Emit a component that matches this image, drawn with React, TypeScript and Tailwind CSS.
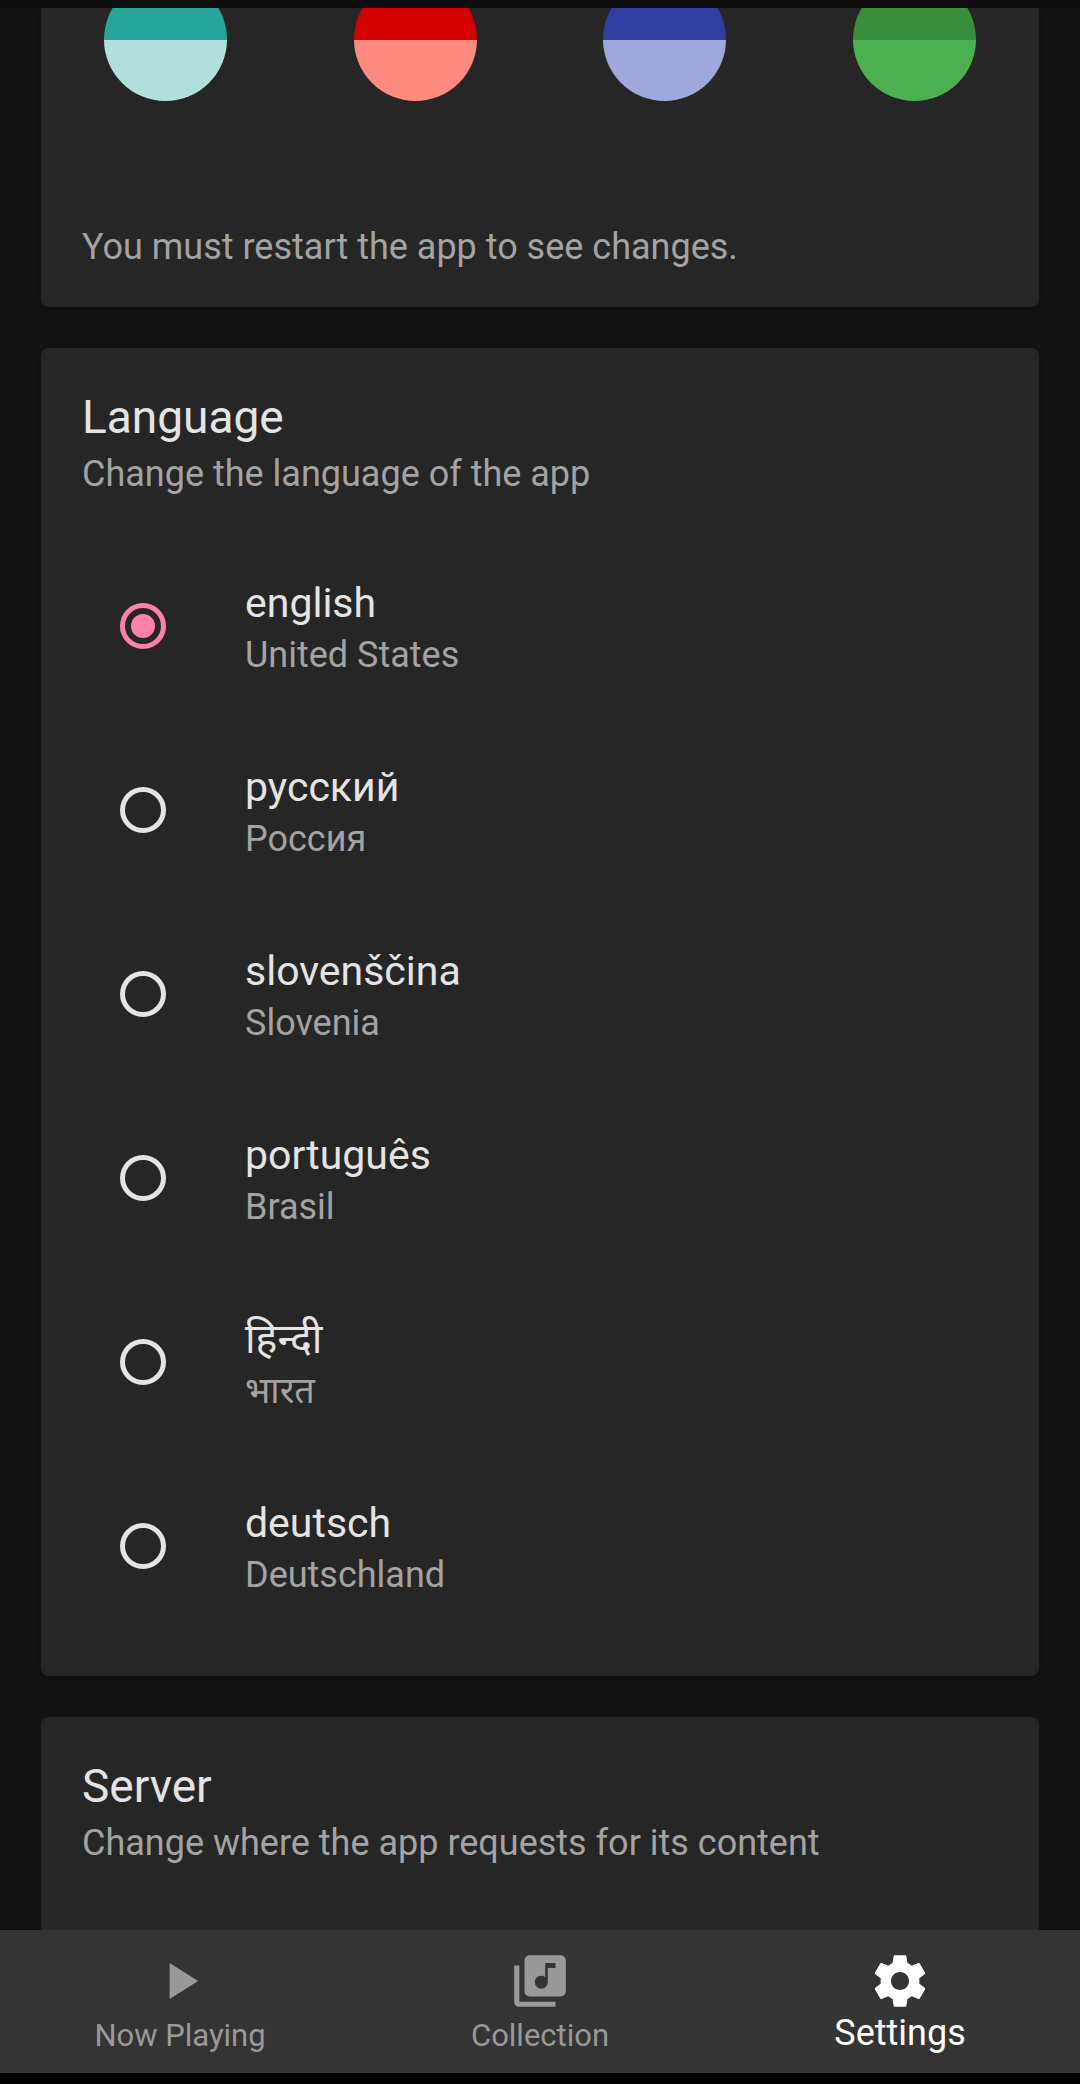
import { useState } from "react";

type Language = {
  code: string;
  name: string;
  region: string;
};

const swatches = [
  { id: "teal", top: "bg-[#26a69a]", bottom: "bg-[#b2dfdb]" },
  { id: "red", top: "bg-[#d50000]", bottom: "bg-[#ff8a80]" },
  { id: "indigo", top: "bg-[#303f9f]", bottom: "bg-[#9fa8da]" },
  { id: "green", top: "bg-[#388e3c]", bottom: "bg-[#4caf50]" },
];

const languages: Language[] = [
  { code: "en", name: "english", region: "United States" },
  { code: "ru", name: "русский", region: "Россия" },
  { code: "sl", name: "slovenščina", region: "Slovenia" },
  { code: "pt", name: "português", region: "Brasil" },
  { code: "hi", name: "हिन्दी", region: "भारत" },
  { code: "de", name: "deutsch", region: "Deutschland" },
];

const tabs = [
  { label: "Now Playing", path: "M8 5v14l11-7z" },
  {
    label: "Collection",
    path: "M20 2H8c-1.1 0-2 .9-2 2v12c0 1.1.9 2 2 2h12c1.1 0 2-.9 2-2V4c0-1.1-.9-2-2-2zm-2 5h-3v5.5c0 1.38-1.12 2.5-2.5 2.5S10 13.88 10 12.5s1.12-2.5 2.5-2.5c.57 0 1.08.19 1.5.51V5h4v2zM4 6H2v14c0 1.1.9 2 2 2h14v-2H4V6z",
  },
  {
    label: "Settings",
    path: "M19.43 12.98c.04-.32.07-.64.07-.98s-.03-.66-.07-.98l2.11-1.65c.19-.15.24-.42.12-.64l-2-3.46c-.12-.22-.39-.3-.61-.22l-2.49 1c-.52-.4-1.08-.73-1.69-.98l-.38-2.65C14.46 2.18 14.25 2 14 2h-4c-.25 0-.46.18-.49.42l-.38 2.65c-.61.25-1.17.59-1.69.98l-2.49-1c-.23-.09-.49 0-.61.22l-2 3.46c-.13.22-.07.49.12.64l2.11 1.65c-.04.32-.07.65-.07.98s.03.66.07.98l-2.11 1.65c-.19.15-.24.42-.12.64l2 3.46c.12.22.39.3.61.22l2.49-1c.52.4 1.08.73 1.69.98l.38 2.65c.03.24.24.42.49.42h4c.25 0 .46-.18.49-.42l.38-2.65c.61-.25 1.17-.59 1.69-.98l2.49 1c.23.09.49 0 .61-.22l2-3.46c.12-.22.07-.49-.12-.64l-2.11-1.65zM12 15.5c-1.93 0-3.5-1.57-3.5-3.5s1.57-3.5 3.5-3.5 3.5 1.57 3.5 3.5-1.57 3.5-3.5 3.5z",
  },
];

function CardHeader({ title, subtitle }: { title: string; subtitle: string }) {
  return (
    <header>
      <h2 className="text-[46px] leading-[58px] text-[#e4e4e4]">{title}</h2>
      <p className="text-[36px] leading-[56px] text-[#a3a3a3]">{subtitle}</p>
    </header>
  );
}

function LanguageOption({
  language,
  checked,
  onSelect,
}: {
  language: Language;
  checked: boolean;
  onSelect: () => void;
}) {
  return (
    <label className="flex h-[184px] cursor-pointer items-center gap-[79px] pl-[38px]">
      <input
        type="radio"
        name="language"
        value={language.code}
        checked={checked}
        onChange={onSelect}
        className="grid size-[46px] shrink-0 appearance-none place-items-center rounded-full border-[5px] border-[#e4e4e4] before:size-6 before:rounded-full checked:border-[#ff80ab] checked:before:bg-[#ff80ab]"
      />
      <span className="flex flex-col pt-1.5" lang={language.code}>
        <span className="text-[41px] leading-[52px] text-[#e4e4e4]">
          {language.name}
        </span>
        <span className="text-[36px] leading-[52px] text-[#a3a3a3]">
          {language.region}
        </span>
      </span>
    </label>
  );
}

export default function App() {
  const [language, setLanguage] = useState("en");
  const [tab, setTab] = useState("Settings");

  return (
    <div className="flex h-screen flex-col bg-[#121212] font-[Roboto,'Noto_Sans_Devanagari','Noto_Sans',sans-serif]">
      <div className="h-2 shrink-0 bg-[#0d0d0d]" />

      <main className="flex min-h-0 flex-1 flex-col gap-[41px] overflow-hidden px-[41px]">
        <section className="shrink-0 rounded-b-lg bg-[#262626] pb-8 shadow-md">
          {/* swatches are scrolled halfway under the status bar */}
          <div className="grid h-[93px] grid-cols-4 content-end justify-items-center overflow-hidden">
            {swatches.map((swatch) => (
              <button
                key={swatch.id}
                aria-label={swatch.id}
                className="flex size-[123px] flex-col overflow-hidden rounded-full"
              >
                <span className={`w-full flex-1 ${swatch.top}`} />
                <span className={`w-full flex-1 ${swatch.bottom}`} />
              </button>
            ))}
          </div>
          <p className="mt-[118px] px-[41px] text-[36px] leading-[56px] text-[#a3a3a3]">
            You must restart the app to see changes.
          </p>
        </section>

        <section className="shrink-0 rounded-lg bg-[#262626] px-[41px] pt-10 pb-[38px] shadow-md">
          <CardHeader
            title="Language"
            subtitle="Change the language of the app"
          />
          <div className="mt-8">
            {languages.map((item) => (
              <LanguageOption
                key={item.code}
                language={item}
                checked={item.code === language}
                onSelect={() => setLanguage(item.code)}
              />
            ))}
          </div>
        </section>

        <section className="flex-1 rounded-t-lg bg-[#262626] px-[41px] pt-10">
          <CardHeader
            title="Server"
            subtitle="Change where the app requests for its content"
          />
        </section>
      </main>

      <nav className="grid h-[143px] shrink-0 grid-cols-3 bg-[#343434]">
        {tabs.map(({ label, path }) => (
          <button
            key={label}
            onClick={() => setTab(label)}
            className={`flex flex-col items-center pt-5 ${
              label === tab
                ? "text-[36px] leading-[42px] text-white"
                : "text-[31px] leading-[48px] text-[#999999]"
            }`}
          >
            <svg
              viewBox="0 0 24 24"
              fill="currentColor"
              aria-hidden="true"
              className="size-[62px]"
            >
              <path d={path} />
            </svg>
            {label}
          </button>
        ))}
      </nav>
      <div className="h-[11px] shrink-0 bg-black" />
    </div>
  );
}
